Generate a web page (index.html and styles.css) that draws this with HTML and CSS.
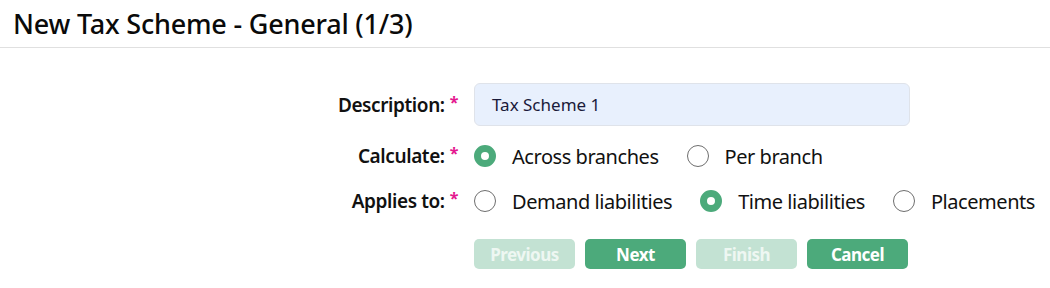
FILE: index.html
```html
<!DOCTYPE html>
<html>
<head>
<meta charset="utf-8">
<link rel="stylesheet" href="styles.css">
</head>
<body>
<header class="page-header">
  <h1 class="title">New Tax Scheme - General (1/3)</h1>
</header>
<form class="form">
  <div class="label">Description:<span class="req">*</span></div>
  <div class="control"><div class="input">Tax Scheme 1</div></div>

  <div class="label">Calculate:<span class="req">*</span></div>
  <div class="control radios">
    <label class="radio"><span class="dot checked"></span>Across branches</label>
    <label class="radio"><span class="dot"></span>Per branch</label>
  </div>

  <div class="label">Applies to:<span class="req">*</span></div>
  <div class="control radios">
    <label class="radio"><span class="dot"></span>Demand liabilities</label>
    <label class="radio"><span class="dot checked"></span>Time liabilities</label>
    <label class="radio"><span class="dot"></span>Placements</label>
  </div>

  <div></div>
  <div class="control buttons">
    <span class="btn disabled">Previous</span>
    <span class="btn">Next</span>
    <span class="btn disabled">Finish</span>
    <span class="btn">Cancel</span>
  </div>
</form>
</body>
</html>
```
FILE: styles.css
```css
html, body {
  margin: 0;
  padding: 0;
  background: #fff;
  font-family: "Noto Sans", "Open Sans", sans-serif;
  color: #111;
}
.page-header {
  height: 47px;
  border-bottom: 1px solid #e0e0e0;
  display: flex;
  align-items: center;
  padding-left: 13px;
}
.title {
  margin: 0;
  font-size: 27px;
  font-weight: 500;
  letter-spacing: -0.2px;
  color: #0a0a0a;
}
.form {
  display: grid;
  grid-template-columns: 458px auto;
  column-gap: 16px;
  grid-template-rows: 43px 30px 30px 38px;
  row-gap: 15px;
  margin-top: 35px;
}
.label {
  display: flex;
  align-items: center;
  justify-content: flex-end;
  font-size: 19px;
  font-weight: 600;
  letter-spacing: -0.4px;
}
.req {
  color: #e4178f;
  margin-left: 5px;
  font-weight: 700;
  position: relative;
  top: -3px;
  font-size: 16px;
}
.control {
  display: flex;
  align-items: center;
}
.input {
  box-sizing: border-box;
  width: 436px;
  height: 43px;
  border: 1px solid #dfe3ea;
  border-radius: 6px;
  background: #e8f0fd;
  padding-left: 17px;
  display: flex;
  align-items: center;
  font-size: 17px;
  color: #1a1a3a;
}
.radios { gap: 28px; }
.radio {
  display: flex;
  align-items: center;
  font-size: 20px;
  letter-spacing: -0.45px;
}
.dot {
  width: 22px;
  height: 22px;
  box-sizing: border-box;
  border-radius: 50%;
  border: 1px solid #6e6e6e;
  margin-right: 16px;
  background: #fff;
}
.dot.checked {
  border: 7px solid #4caa7b;
  background: #fff;
}
.buttons {
  gap: 10px;
  align-items: flex-end;
}
.btn {
  width: 101px;
  height: 30px;
  border-radius: 5px;
  background: #4caa7b;
  color: #fff;
  font-weight: 700;
  font-size: 17px;
  letter-spacing: -0.5px;
  display: flex;
  align-items: center;
  justify-content: center;
}
.btn.disabled {
  background: #c3e2d3;
  color: #eef7f2;
}
```
